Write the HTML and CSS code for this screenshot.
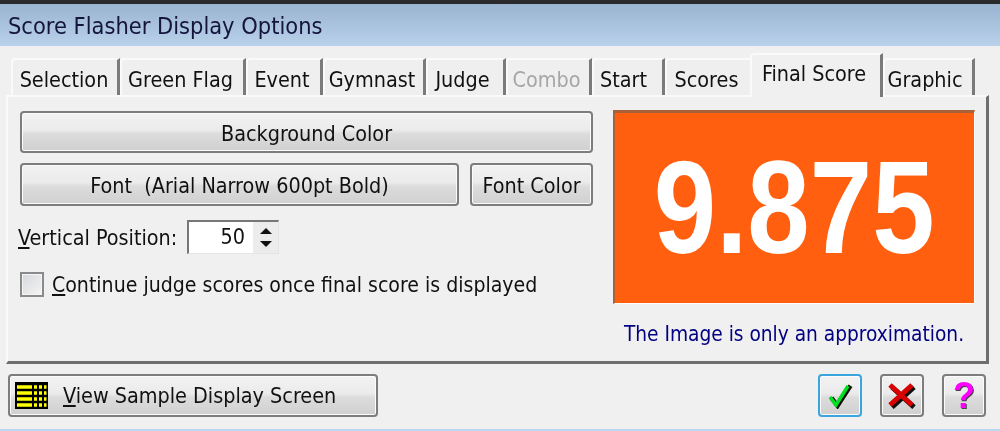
FILE: index.html
```html
<!DOCTYPE html>
<html lang="en">
<head>
    <meta charset="UTF-8">
    <title>Score Flasher Display Options</title>
    <link rel="stylesheet" href="styles.css">
</head>
<body>
    <div class="window">
        <div class="title-bar">Score Flasher Display Options</div>

        <div class="tabs">
            <div class="tab tab-selection">Selection</div>
            <div class="tab tab-green">Green Flag</div>
            <div class="tab tab-event">Event</div>
            <div class="tab tab-gymnast">Gymnast</div>
            <div class="tab tab-judge">Judge</div>
            <div class="tab tab-combo disabled">Combo</div>
            <div class="tab tab-start">Start</div>
            <div class="tab tab-scores">Scores</div>
            <div class="tab tab-final active">Final Score</div>
            <div class="tab tab-graphic">Graphic</div>
        </div>

        <div class="panel">
            <div class="left-col">
                <button class="btn btn-bg">Background Color</button>
                <div class="font-row">
                    <button class="btn btn-font">Font&nbsp; (Arial Narrow 600pt Bold)</button>
                    <button class="btn btn-color">Font Color</button>
                </div>
                <div class="position-row">
                    <span class="position-label"><u>V</u>ertical Position:</span>
                    <div class="spinner">
                        <span class="spinner-value">50</span>
                        <div class="spinner-arrows">
                            <span class="arrow-up"></span>
                            <span class="arrow-down"></span>
                        </div>
                    </div>
                </div>
                <label class="check-row">
                    <span class="checkbox"></span>
                    <span class="check-label"><u>C</u>ontinue judge scores once final score is displayed</span>
                </label>
            </div>
            <div class="right-col">
                <div class="preview"><span class="preview-score">9.875</span></div>
                <div class="preview-note">The Image is only an approximation.</div>
            </div>
        </div>

        <div class="footer">
            <button class="btn btn-sample">
                <svg class="sample-icon" width="33" height="27" viewBox="0 0 33 27">
                    <rect width="33" height="27" fill="#000"/>
                    <path d="M2 5h15M2 11h15M2 17h15M2 23h15" stroke="#ffff00" stroke-width="3.500" fill="none"/>
                    <path d="M19 5h3M19 11h3M19 17h3M19 23h3M24 5h3M24 11h3M24 17h3M24 23h3M29 5h2.500M29 11h2.500M29 17h2.500M29 23h2.500" stroke="#ffff00" stroke-width="3.500" fill="none"/>
                </svg>
                <span><u>V</u>iew Sample Display Screen</span>
            </button>
            <div class="footer-actions">
                <button class="btn icon-btn icon-ok">
                    <svg width="26" height="27" viewBox="0 0 26 27">
                        <path d="M3 15l6 8L22 3" fill="none" stroke="#111" stroke-width="4.500" transform="translate(1.500 0.800)"/>
                        <path d="M3 15l6 8L21 4" fill="none" stroke="#00e020" stroke-width="3.500"/>
                    </svg>
                </button>
                <button class="btn icon-btn icon-cancel">
                    <svg width="30" height="27" viewBox="0 0 30 27">
                        <path d="M4 4l22 20M26 4L4 24" fill="none" stroke="#111" stroke-width="5" transform="translate(1 1.200)"/>
                        <path d="M3 3l22 20M25 3L3 23" fill="none" stroke="#d80000" stroke-width="5"/>
                    </svg>
                </button>
                <button class="btn icon-btn icon-help">?</button>
            </div>
        </div>
        <div class="bottom-edge"></div>
    </div>
</body>
</html>
```

FILE: styles.css
```css
* {
    margin: 0;
    padding: 0;
    box-sizing: border-box;
}

html, body {
    height: 431px;
    overflow: hidden;
}

body {
    font-family: "DejaVu Sans", "Liberation Sans", sans-serif;
    font-stretch: condensed;
    font-size: 21.4px;
    color: #111;
    background: #f0f0f0;
}

.window {
    height: 431px;
    display: flex;
    flex-direction: column;
    border-top: 4px solid #2a2a2a;
    filter: blur(0.4px);
}

.title-bar {
    height: 42px;
    padding: 8px 0 0 8px;
    background: linear-gradient(#9ab3d0, #b9d1ea);
    color: #14143c;
    font-size: 23.4px;
}

.tabs {
    display: flex;
    align-items: flex-end;
    height: 49px;
    padding-left: 11px;
    position: relative;
    z-index: 1;
}

.tab {
    height: 37px;
    padding: 7px 4px 0 0;
    text-align: center;
    background: #efefef;
    border-top: 2px solid #fafafa;
    border-left: 2px solid #fafafa;
    border-right: 3px solid #7a7a7a;
    border-top-left-radius: 4px;
    white-space: nowrap;
}

.tab-selection { width: 109px; padding-right: 2px; }
.tab-green { width: 126px; }
.tab-event { width: 77px; }
.tab-gymnast { width: 103px; }
.tab-judge { width: 80px; padding-right: 6px; }
.tab-combo { width: 86px; }
.tab-start { width: 73px; padding-right: 9px; }
.tab-scores { width: 85px; border-right: none; }
.tab-final { width: 133px; }
.tab-graphic { width: 92px; padding-right: 7px; }

.disabled {
    color: #a6a6a6;
}

.active {
    height: 44px;
    padding-top: 6px;
    margin-bottom: -2px;
    background: #f0f0f0;
}

.panel {
    height: 269px;
    margin-left: 6px;
    width: 983px;
    display: flex;
    justify-content: space-between;
    padding: 14px 11px 0 12px;
    border-top: 2px solid #fafafa;
    border-left: 2px solid #fafafa;
    border-right: 3px solid #6e6e6e;
    border-bottom: 3px solid #6e6e6e;
}

.left-col {
    width: 573px;
    display: flex;
    flex-direction: column;
}

.btn {
    font-family: inherit;
    font-stretch: inherit;
    font-size: 21.4px;
    color: #111;
    padding-top: 2px;
    border: 2px solid #7d7d7d;
    border-radius: 4px;
    background: linear-gradient(#f2f2f2 0%, #ebebeb 45%, #dcdcdc 55%, #d0d0d0 100%);
    box-shadow: inset 0 0 0 1px #fbfbfb;
}

.btn-bg {
    height: 42px;
}

.font-row {
    display: flex;
    justify-content: space-between;
    margin-top: 10px;
}

.btn-font {
    width: 439px;
    height: 43px;
}

.btn-color {
    width: 123px;
    height: 43px;
}

.position-row {
    display: flex;
    align-items: center;
    margin-top: 14px;
    margin-left: -2px;
}

.position-label {
    width: 169px;
}

.spinner {
    width: 92px;
    height: 34px;
    display: flex;
    justify-content: space-between;
    background: #fff;
    border-top: 2px solid #777;
    border-left: 2px solid #777;
    border-right: 1px solid #e4e4e4;
    border-bottom: 1px solid #e4e4e4;
}

.spinner-value {
    width: 56px;
    text-align: right;
    line-height: 30px;
}

.spinner-arrows {
    width: 25px;
    display: flex;
    flex-direction: column;
    align-items: center;
    justify-content: space-around;
    background: #ececec;
    padding: 2px 0;
}

.arrow-up {
    border: 6px solid transparent;
    border-top: none;
    border-bottom: 6px solid #111;
}

.arrow-down {
    border: 6px solid transparent;
    border-bottom: none;
    border-top: 6px solid #111;
}

.check-row {
    display: flex;
    align-items: center;
    gap: 8px;
    margin-top: 18px;
}

.check-label {
    font-size: 21.1px;
}

.checkbox {
    width: 24px;
    height: 25px;
    border: 2px solid #8a8a8a;
    background: linear-gradient(135deg, #d5d8dc, #f4f4f4);
    box-shadow: inset 0 0 0 1px #f5f5f5;
}

.right-col {
    width: 362px;
}

.preview {
    height: 194px;
    margin-top: -1px;
    display: flex;
    align-items: center;
    justify-content: center;
    background: #ff5f0f;
    border-top: 3px solid #a8623a;
    border-left: 2px solid #a8623a;
    border-right: 1px solid #fff;
    border-bottom: 1px solid #fff;
}

.preview-score {
    display: inline-block;
    font-family: "Liberation Sans", sans-serif;
    font-stretch: normal;
    font-weight: bold;
    font-size: 132px;
    line-height: 1;
    color: #fff;
    transform: scaleX(0.85);
}

.preview-note {
    margin-top: 18px;
    text-align: center;
    font-size: 20.7px;
    color: #000080;
}

.footer {
    display: flex;
    justify-content: space-between;
    height: 65px;
    padding: 10px 14px 0 8px;
}

.btn-sample {
    width: 370px;
    height: 43px;
    display: flex;
    align-items: center;
    gap: 15px;
    padding-left: 5px;
    padding-top: 0;
}

.footer-actions {
    display: flex;
    gap: 18px;
}

.icon-btn {
    width: 44px;
    height: 43px;
    padding-top: 0;
    display: flex;
    align-items: center;
    justify-content: center;
}

.icon-ok {
    border-color: #3aa5dc;
}

.icon-help {
    font-family: "Liberation Sans", sans-serif;
    font-stretch: normal;
    font-size: 36px;
    font-weight: bold;
    color: #ff00ff;
    text-shadow: 1px 1px 0 #444;
}

.bottom-edge {
    height: 2px;
    background: #b9d7f0;
}
```
